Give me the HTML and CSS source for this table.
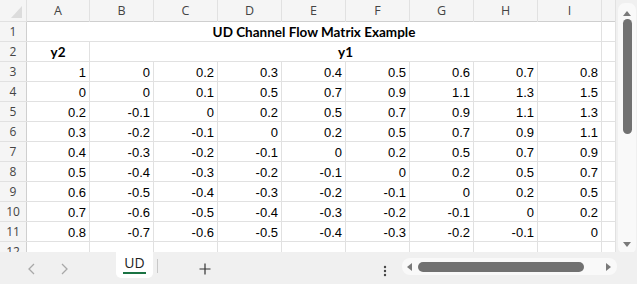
FILE: index.html
```html
<!DOCTYPE html>
<html>
<head>
<meta charset="utf-8">
<link rel="stylesheet" href="styles.css">
</head>
<body>
<div class="app">
  <div class="main">
    <div class="sheet">
      <div class="corner hdr"><svg width="26" height="21" viewBox="0 0 26 21"><polygon points="11,18 22,6 22,18" fill="#dcdcdc"/></svg></div>
      <div class="hdr col">A</div><div class="hdr col">B</div><div class="hdr col">C</div><div class="hdr col">D</div><div class="hdr col">E</div><div class="hdr col">F</div><div class="hdr col">G</div><div class="hdr col">H</div><div class="hdr col">I</div><div class="hdr col"></div>

      <div class="hdr row">1</div><div class="c title span9">UD Channel Flow Matrix Example</div><div class="c"></div>
      <div class="hdr row">2</div><div class="c bold center">y2</div><div class="c bold center span8">y1</div><div class="c"></div>

      <div class="hdr row">3</div><div class="c">1</div><div class="c">0</div><div class="c">0.2</div><div class="c">0.3</div><div class="c">0.4</div><div class="c">0.5</div><div class="c">0.6</div><div class="c">0.7</div><div class="c">0.8</div><div class="c"></div>
      <div class="hdr row">4</div><div class="c">0</div><div class="c">0</div><div class="c">0.1</div><div class="c">0.5</div><div class="c">0.7</div><div class="c">0.9</div><div class="c">1.1</div><div class="c">1.3</div><div class="c">1.5</div><div class="c"></div>
      <div class="hdr row">5</div><div class="c">0.2</div><div class="c">-0.1</div><div class="c">0</div><div class="c">0.2</div><div class="c">0.5</div><div class="c">0.7</div><div class="c">0.9</div><div class="c">1.1</div><div class="c">1.3</div><div class="c"></div>
      <div class="hdr row">6</div><div class="c">0.3</div><div class="c">-0.2</div><div class="c">-0.1</div><div class="c">0</div><div class="c">0.2</div><div class="c">0.5</div><div class="c">0.7</div><div class="c">0.9</div><div class="c">1.1</div><div class="c"></div>
      <div class="hdr row">7</div><div class="c">0.4</div><div class="c">-0.3</div><div class="c">-0.2</div><div class="c">-0.1</div><div class="c">0</div><div class="c">0.2</div><div class="c">0.5</div><div class="c">0.7</div><div class="c">0.9</div><div class="c"></div>
      <div class="hdr row">8</div><div class="c">0.5</div><div class="c">-0.4</div><div class="c">-0.3</div><div class="c">-0.2</div><div class="c">-0.1</div><div class="c">0</div><div class="c">0.2</div><div class="c">0.5</div><div class="c">0.7</div><div class="c"></div>
      <div class="hdr row">9</div><div class="c">0.6</div><div class="c">-0.5</div><div class="c">-0.4</div><div class="c">-0.3</div><div class="c">-0.2</div><div class="c">-0.1</div><div class="c">0</div><div class="c">0.2</div><div class="c">0.5</div><div class="c"></div>
      <div class="hdr row">10</div><div class="c">0.7</div><div class="c">-0.6</div><div class="c">-0.5</div><div class="c">-0.4</div><div class="c">-0.3</div><div class="c">-0.2</div><div class="c">-0.1</div><div class="c">0</div><div class="c">0.2</div><div class="c"></div>
      <div class="hdr row">11</div><div class="c">0.8</div><div class="c">-0.7</div><div class="c">-0.6</div><div class="c">-0.5</div><div class="c">-0.4</div><div class="c">-0.3</div><div class="c">-0.2</div><div class="c">-0.1</div><div class="c">0</div><div class="c"></div>
      <div class="hdr row last">12</div><div class="c"></div><div class="c"></div><div class="c"></div><div class="c"></div><div class="c"></div><div class="c"></div><div class="c"></div><div class="c"></div><div class="c"></div><div class="c"></div>
    </div>
    <div class="vbar">
      <div class="vtrack">
        <svg class="arr" width="10" height="8" viewBox="0 0 10 8"><polygon points="1,7 5,2 9,7" fill="#7a7a7a"/></svg>
        <div class="vthumb"></div>
        <div class="vspace"></div>
        <svg class="arr" width="10" height="8" viewBox="0 0 10 8"><polygon points="1,1 9,1 5,6" fill="#7a7a7a"/></svg>
      </div>
    </div>
  </div>
  <div class="tabbar">
    <div class="nav">
      <svg width="10" height="14" viewBox="0 0 10 14"><polyline points="7,2 2,7 7,12" fill="none" stroke="#a8a8a8" stroke-width="1.3"/></svg>
      <svg width="10" height="14" viewBox="0 0 10 14"><polyline points="3,2 8,7 3,12" fill="none" stroke="#a8a8a8" stroke-width="1.3"/></svg>
    </div>
    <div class="tab"><span class="tabname">UD</span></div>
    <div class="sep"></div>
    <div class="add"><svg width="12" height="12" viewBox="0 0 12 12"><path d="M6 0.5V11.5M0.5 6H11.5" stroke="#333" stroke-width="1.2"/></svg></div>
    <div class="grow"></div>
    <div class="more"><svg width="4" height="12" viewBox="0 0 4 12"><circle cx="2" cy="2" r="1.2" fill="#444"/><circle cx="2" cy="6" r="1.2" fill="#444"/><circle cx="2" cy="10" r="1.2" fill="#444"/></svg></div>
    <div class="htrack">
      <svg width="8" height="10" viewBox="0 0 8 10"><polygon points="7,1 7,9 2,5" fill="#7a7a7a"/></svg>
      <div class="hthumb"></div>
      <div class="hspace"></div>
      <svg width="8" height="10" viewBox="0 0 8 10"><polygon points="1,1 1,9 6,5" fill="#7a7a7a"/></svg>
    </div>
  </div>
</div>
</body>
</html>
```

FILE: styles.css
```css
* { box-sizing: border-box; }
html, body { margin: 0; padding: 0; }
body { width: 637px; height: 284px; overflow: hidden; background: #f0f0f0; font-family: "Liberation Sans", Arial, sans-serif; }
.app { display: flex; flex-direction: column; width: 637px; height: 284px; }
.main { display: flex; height: 252px; overflow: hidden; }
.sheet {
  display: grid;
  grid-template-columns: 26px 62px repeat(8, 63px) 13px;
  grid-template-rows: 21px repeat(11, 19px) 10px;
  gap: 1px;
  background: #e1e1e1;
  width: 616px;
  height: 252px;
  padding-right: 1px;
  overflow: hidden;
}
.hdr {
  background: #f5f5f5;
  color: #444;
  font-family: "Open Sans", "Noto Sans", sans-serif;
  font-size: 12.5px;
  display: flex;
  align-items: center;
  justify-content: center;
}
.corner { align-items: stretch; justify-content: stretch; }
.col { box-shadow: 0 1px 0 #cfcfcf; }
.row { box-shadow: 1px 0 0 #cfcfcf; font-size: 12px; }
.row.last { align-items: flex-start; overflow: hidden; line-height: 19px; }
.c {
  background: #fff;
  color: #000;
  font-size: 13px;
  display: flex;
  align-items: center;
  justify-content: flex-end;
  padding: 1px 3px 0 0;
  white-space: nowrap;
}
.title { font-family: "Lato", sans-serif; font-weight: 700; font-size: 13.5px; justify-content: center; padding: 0; }
.bold { font-family: "Lato", sans-serif; font-weight: 700; font-size: 13.5px; }
.center { justify-content: center; padding: 0; }
.span9 { grid-column: span 9; }
.span8 { grid-column: span 8; }
.vbar { width: 21px; height: 252px; padding: 3px 1px 0 2px; background: #f0f0f0; }
.vtrack {
  height: 251px;
  background: #f9f9f9;
  border-radius: 7px;
  display: flex;
  flex-direction: column;
  align-items: center;
  padding: 6px 0 5px;
}
.vtrack .arr { flex: none; }
.vthumb { width: 9px; height: 115px; margin-top: 2px; background: #717171; border-radius: 5px; flex: none; }
.vspace { flex: 1; }
.tabbar { height: 32px; display: flex; align-items: flex-start; background: #f0f0f0; }
.nav { display: flex; gap: 22px; padding: 10px 0 0 27px; width: 116px; }
.tab {
  width: 37px;
  height: 29px;
  margin-top: -3px;
  background: #fff;
  border-radius: 0 0 5px 5px;
  display: flex;
  justify-content: center;
  padding-top: 5px;
}
.tabname {
  font-family: "Open Sans", "Noto Sans", sans-serif;
  font-size: 14px;
  color: #222;
  line-height: 17px;
  height: 20px;
  border-bottom: 2px solid #1a7343;
  padding: 0 1px;
}
.sep { width: 1px; height: 14px; background: #c8c8c8; margin: 7px 0 0 4px; }
.add { padding: 9px 0 0 41px; }
.grow { flex: 1; }
.more { padding: 11px 0 0 0; margin-right: 15px; }
.htrack {
  width: 215px;
  height: 17px;
  margin: 6px 20px 0 0;
  background: #f9f9f9;
  border-radius: 8px;
  display: flex;
  align-items: center;
  padding: 0 4px 0 3px;
}
.hthumb { width: 166px; height: 10px; margin-left: 5px; background: #717171; border-radius: 5px; }
.hspace { flex: 1; }
```
